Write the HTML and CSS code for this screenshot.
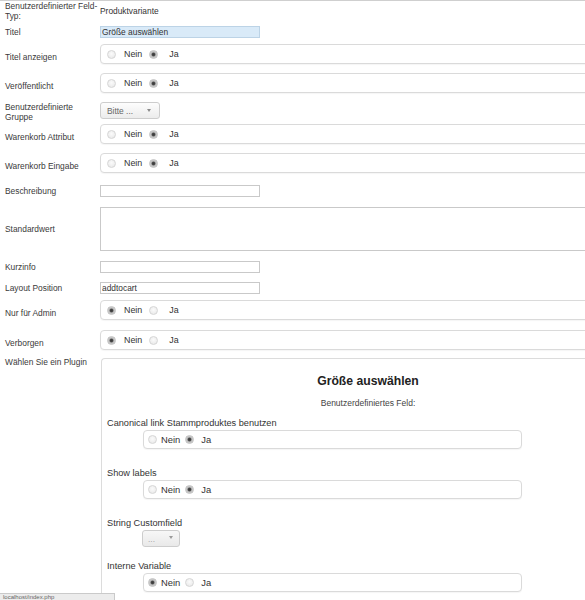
FILE: index.html
```html
<!DOCTYPE html>
<html lang="de">
<head>
<meta charset="utf-8">
<title>Benutzerdefiniertes Feld</title>
<link rel="stylesheet" href="styles.css">
</head>
<body>
<form class="form">
  <div class="row row-type">
    <div class="lbl">Benutzerdefinierter Feld-Typ:</div>
    <div class="val">Produktvariante</div>
  </div>

  <div class="row row-titel">
    <label class="lbl" for="titel">Titel</label>
    <div class="ctl"><input class="text text-focus" id="titel" type="text" value="Größe auswählen"></div>
  </div>

  <div class="row row-radio">
    <div class="lbl">Titel anzeigen</div>
    <div class="ctl">
      <div class="radios">
        <label class="opt"><input type="radio" name="show_title"><span>Nein</span></label>
        <label class="opt"><input type="radio" name="show_title" checked><span>Ja</span></label>
      </div>
    </div>
  </div>

  <div class="row row-radio">
    <div class="lbl">Veröffentlicht</div>
    <div class="ctl">
      <div class="radios">
        <label class="opt"><input type="radio" name="published"><span>Nein</span></label>
        <label class="opt"><input type="radio" name="published" checked><span>Ja</span></label>
      </div>
    </div>
  </div>

  <div class="row row-select">
    <div class="lbl">Benutzerdefinierte Gruppe</div>
    <div class="ctl">
      <div class="select"><span class="select-text">Bitte ...</span><span class="caret"></span></div>
    </div>
  </div>

  <div class="row row-radio">
    <div class="lbl">Warenkorb Attribut</div>
    <div class="ctl">
      <div class="radios">
        <label class="opt"><input type="radio" name="cart_attr"><span>Nein</span></label>
        <label class="opt"><input type="radio" name="cart_attr" checked><span>Ja</span></label>
      </div>
    </div>
  </div>

  <div class="row row-radio spaced">
    <div class="lbl">Warenkorb Eingabe</div>
    <div class="ctl">
      <div class="radios">
        <label class="opt"><input type="radio" name="cart_input"><span>Nein</span></label>
        <label class="opt"><input type="radio" name="cart_input" checked><span>Ja</span></label>
      </div>
    </div>
  </div>

  <div class="row row-text">
    <label class="lbl" for="desc">Beschreibung</label>
    <div class="ctl"><input class="text" id="desc" type="text" value=""></div>
  </div>

  <div class="row row-area">
    <label class="lbl" for="default">Standardwert</label>
    <div class="ctl"><textarea class="area" id="default"></textarea></div>
  </div>

  <div class="row row-text">
    <label class="lbl" for="tip">Kurzinfo</label>
    <div class="ctl"><input class="text" id="tip" type="text" value=""></div>
  </div>

  <div class="row row-text tight">
    <label class="lbl" for="layout">Layout Position</label>
    <div class="ctl"><input class="text" id="layout" type="text" value="addtocart"></div>
  </div>

  <div class="row row-radio spaced">
    <div class="lbl">Nur für Admin</div>
    <div class="ctl">
      <div class="radios">
        <label class="opt"><input type="radio" name="admin_only" checked><span>Nein</span></label>
        <label class="opt"><input type="radio" name="admin_only"><span>Ja</span></label>
      </div>
    </div>
  </div>

  <div class="row row-radio snug">
    <div class="lbl">Verborgen</div>
    <div class="ctl">
      <div class="radios">
        <label class="opt"><input type="radio" name="hidden" checked><span>Nein</span></label>
        <label class="opt"><input type="radio" name="hidden"><span>Ja</span></label>
      </div>
    </div>
  </div>

  <div class="row row-plugin">
    <div class="lbl">Wählen Sie ein Plugin</div>
    <div class="ctl">
      <div class="plugin">
        <h2 class="plugin-title">Größe auswählen</h2>
        <div class="plugin-sub">Benutzerdefiniertes Feld:</div>

        <div class="p-field first">
          <div class="p-lbl">Canonical link Stammproduktes benutzen</div>
          <div class="radios small">
            <label class="opt"><input type="radio" name="canonical"><span>Nein</span></label>
            <label class="opt"><input type="radio" name="canonical" checked><span>Ja</span></label>
          </div>
        </div>

        <div class="p-field">
          <div class="p-lbl">Show labels</div>
          <div class="radios small">
            <label class="opt"><input type="radio" name="show_labels"><span>Nein</span></label>
            <label class="opt"><input type="radio" name="show_labels" checked><span>Ja</span></label>
          </div>
        </div>

        <div class="p-field">
          <div class="p-lbl">String Customfield</div>
          <div class="select disabled"><span class="select-text">...</span><span class="caret"></span></div>
        </div>

        <div class="p-field after-select">
          <div class="p-lbl">Interne Variable</div>
          <div class="radios small">
            <label class="opt"><input type="radio" name="internal" checked><span>Nein</span></label>
            <label class="opt"><input type="radio" name="internal"><span>Ja</span></label>
          </div>
        </div>
      </div>
    </div>
  </div>
</form>

<div class="status">localhost/index.php</div>
</body>
</html>
```

FILE: styles.css
```css
html {
  overflow: hidden;
}

body {
  margin: 0;
  border-top: 1px solid #cfcfcf;
  background: #fff;
  color: #333;
  font-family: "Liberation Sans", Arial, sans-serif;
  font-size: 8.4px;
}

.form {
  width: 680px;
}

/* two-column field rows */
.row {
  display: grid;
  grid-template-columns: 100px 1fr;
  align-items: start;
}

.lbl {
  display: block;
  padding-left: 5px;
  line-height: 10px;
  color: #3a3a3a;
}

.row-type { height: 23px; }
.row-type .val { padding-top: 5px; line-height: 10px; color: #333; }

.row-titel { height: 18px; }
.row-titel .lbl { padding-top: 3px; }
.row-titel .ctl { padding-top: 2px; }

.row-radio { height: 29px; }
.row-radio.spaced { height: 30px; }
.row-radio.snug { height: 28px; }
.row-radio .lbl { padding-top: 10px; }
.row-radio .ctl { padding-top: 2px; }

.row-select { height: 22px; }
.row-select .lbl { padding-top: 2px; }
.row-select .ctl { padding-top: 2px; }

.row-text { height: 21px; }
.row-text.tight { height: 20px; }
.row-text .lbl { padding-top: 5px; }
.row-text .ctl { padding-top: 4px; }

.row-area { height: 55px; }
.row-area .lbl { padding-top: 22px; }
.row-area .ctl { padding-top: 5px; }

.row-plugin .lbl { padding-top: 1px; }
.row-plugin .ctl { padding-top: 2px; }

/* text inputs */
.text {
  display: block;
  box-sizing: border-box;
  width: 160px;
  height: 12px;
  margin: 0;
  padding: 0 1px;
  border: 1px solid #c9c9c9;
  background: #fff;
  font-family: inherit;
  font-size: 8.4px;
  line-height: 10px;
  color: #333;
  outline: none;
}

.text-focus {
  background: #d9eaf8;
  border-color: #bcd3e6;
}

.area {
  display: block;
  box-sizing: border-box;
  width: 100%;
  height: 44px;
  margin: 0;
  border: 1px solid #c9c9c9;
  resize: none;
  outline: none;
}

/* radio groups */
.radios {
  box-sizing: border-box;
  display: flex;
  align-items: center;
  height: 20px;
  padding-left: 6px;
  border: 1px solid #dadada;
  border-radius: 4px;
  background: #fff;
  box-shadow: 0 1px 1px rgba(0, 0, 0, 0.04);
}

.opt {
  display: flex;
  align-items: center;
  font-size: 8.9px;
  color: #333;
}

.opt input {
  -webkit-appearance: none;
  appearance: none;
  box-sizing: border-box;
  width: 9px;
  height: 9px;
  margin: 0;
  border: 1px solid #d6d6d6;
  border-radius: 50%;
  background: radial-gradient(circle at 50% 40%, #fbfbfb 0, #e6e6e6 100%);
}

.opt input:checked {
  border-color: #c2c2c2;
  background: radial-gradient(circle, #3c3c3c 0, #444 1.3px, #bcbcbc 2.4px, #e4e4e4 100%);
}

.opt span {
  margin-left: 8px;
}

.opt + .opt input {
  margin-left: 7px;
}

.opt + .opt span {
  margin-left: 11px;
}

/* selects */
.select {
  box-sizing: border-box;
  position: relative;
  display: flex;
  align-items: center;
  width: 60px;
  height: 17px;
  padding-left: 6px;
  border: 1px solid #cdcdcd;
  border-radius: 3px;
  background: linear-gradient(#fdfdfd, #ececec);
  color: #666;
  font-size: 8.4px;
}

.caret {
  position: absolute;
  right: 8px;
  top: 6px;
  width: 0;
  height: 0;
  border-left: 2.5px solid transparent;
  border-right: 2.5px solid transparent;
  border-top: 3px solid #8a8a8a;
}

.select.disabled {
  width: 38px;
  margin-left: 35px;
  padding-left: 5px;
  background: linear-gradient(#f7f7f7, #e9e9e9);
  color: #aaa;
}

.select.disabled .caret {
  right: 6px;
  top: 5px;
  border-top-color: #9a9a9a;
}

/* plugin parameters panel */
.plugin {
  box-sizing: border-box;
  width: 528px;
  min-height: 260px;
  margin-left: 1px;
  padding: 15px 0 0 5px;
  border: 1px solid #dcdcdc;
  border-right: 0;
  border-bottom: 0;
  border-radius: 4px 0 0 0;
}

.plugin-title {
  margin: 0;
  font-size: 12.2px;
  line-height: 14px;
  font-weight: bold;
  text-align: center;
  color: #222;
}

.plugin-sub {
  margin-top: 10px;
  line-height: 10px;
  text-align: center;
  font-size: 8.5px;
  color: #444;
}

.p-field {
  margin-top: 19px;
}

.p-field.first {
  margin-top: 10px;
}

.p-field.after-select {
  margin-top: 14px;
}

.p-lbl {
  font-size: 9.2px;
  line-height: 11px;
  color: #333;
}

.radios.small {
  width: 379px;
  height: 19px;
  margin-top: 1px;
  margin-left: 36px;
  padding-left: 4px;
}

.radios.small .opt {
  font-size: 9.4px;
}

.radios.small .opt span {
  margin-left: 4px;
}

.radios.small .opt + .opt input {
  margin-left: 5px;
}

.radios.small .opt + .opt span {
  margin-left: 7px;
}

.p-field .select {
  margin-top: 1px;
}

/* link target bubble in the lower corner */
.status {
  position: fixed;
  left: 0;
  bottom: 0;
  box-sizing: border-box;
  width: 115px;
  height: 7px;
  padding-left: 3px;
  overflow: hidden;
  white-space: nowrap;
  border: 1px solid #cacaca;
  border-left: 0;
  border-bottom: 0;
  background: #ececec;
  color: #666;
  font-size: 6px;
  line-height: 6px;
}
```
